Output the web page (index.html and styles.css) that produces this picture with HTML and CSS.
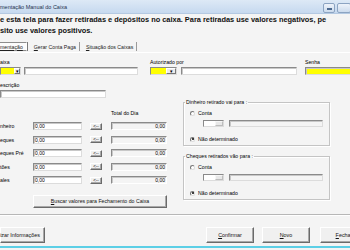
FILE: index.html
```html
<!DOCTYPE html>
<html lang="pt">
<head>
    <meta charset="UTF-8">
    <meta name="viewport" content="width=device-width, initial-scale=1.0">
    <title>Lançamento Manual do Caixa</title>
    <link rel="stylesheet" href="styles.css">
</head>
<body>
    <div class="titlebar">
        <span class="title">mentação Manual do Caixa</span>
        <div class="tb-buttons">
            <span class="tb-btn"><i class="min-glyph"></i></span>
            <span class="tb-btn"></span>
        </div>
    </div>

    <p class="intro">e esta tela para fazer retiradas e depósitos no caixa. Para retiradas use valores negativos, pe<br>sito use valores positivos.</p>

    <div class="tabs">
        <span class="tab active">mentação</span>
        <span class="tab"><u>G</u>erar Conta Paga</span>
        <span class="tab"><u>S</u>ituação dos Caixas</span>
    </div>

    <div class="panel">
        <div class="top-row">
            <div class="field f-caixa">
                <label>aixa</label>
                <div class="line">
                    <div class="combo c-caixa"><span class="drop">▾</span></div>
                    <div class="txt w-caixa"></div>
                </div>
            </div>
            <div class="field f-autor">
                <label>Autorizado por</label>
                <div class="line">
                    <div class="combo c-autor"><span class="drop">▾</span></div>
                    <div class="txt w-autor"></div>
                </div>
            </div>
            <div class="field f-senha">
                <label>Senha</label>
                <div class="txt yellow w-senha"></div>
            </div>
        </div>

        <div class="field f-descr">
            <label>escrição</label>
            <div class="txt w-descr"></div>
        </div>

        <div class="lower">
            <div class="values">
                <div class="total-head">Total do Dia</div>
                <div class="val-row"><span class="val-label">nheiro</span><div class="txt val">0,00</div><span class="btn arrow">&lt;--</span><div class="txt total">0,00</div></div>
                <div class="val-row"><span class="val-label">eques</span><div class="txt val">0,00</div><span class="btn arrow">&lt;--</span><div class="txt total">0,00</div></div>
                <div class="val-row"><span class="val-label">eques Pré</span><div class="txt val">0,00</div><span class="btn arrow">&lt;--</span><div class="txt total">0,00</div></div>
                <div class="val-row"><span class="val-label">tões</span><div class="txt val">0,00</div><span class="btn arrow">&lt;--</span><div class="txt total">0,00</div></div>
                <div class="val-row"><span class="val-label">ales</span><div class="txt val">0,00</div><span class="btn arrow">&lt;--</span><div class="txt total">0,00</div></div>
                <span class="btn buscar"><u>B</u>uscar valores para Fechamento do Caixa</span>
            </div>

            <div class="destinos">
                <fieldset class="group g-dinheiro">
                    <legend>Dinheiro retirado vai para :</legend>
                    <div class="radio-row"><span class="radio"></span>Conta</div>
                    <div class="sub-row"><div class="combo small"><span class="drop"></span></div><div class="txt conta"></div></div>
                    <div class="radio-row last"><span class="radio checked"></span>Não determinado</div>
                </fieldset>
                <fieldset class="group g-cheques">
                    <legend>Cheques retirados vão para :</legend>
                    <div class="radio-row"><span class="radio"></span>Conta</div>
                    <div class="sub-row"><div class="combo small"><span class="drop"></span></div><div class="txt conta"></div></div>
                    <div class="radio-row last"><span class="radio checked"></span>Não determinado</div>
                </fieldset>
            </div>
        </div>
    </div>

    <div class="actions">
        <span class="btn act b-info">izar Informações</span>
        <span class="btn act b-conf"><u>C</u>onfirmar</span>
        <span class="btn act b-novo"><u>N</u>ovo</span>
        <span class="btn act b-fech"><u>F</u>echar</span>
    </div>
    <div class="statusline"></div>
</body>
</html>
```

FILE: styles.css
```css
* {
    box-sizing: border-box;
}

html, body {
    margin: 0;
    width: 350px;
    height: 250px;
    overflow: hidden;
}

body {
    font-family: "Liberation Sans", Arial, sans-serif;
    font-size: 5.2px;
    color: #000;
    background-color: #f4f4f4;
}

/* title bar */
.titlebar {
    display: flex;
    justify-content: space-between;
    align-items: center;
    height: 14px;
    background: linear-gradient(#dde9f6, #c6d9ef);
    border-bottom: 1px solid #b4c9e2;
}

.title {
    font-size: 5.5px;
    color: #1e3350;
}

.tb-buttons {
    display: flex;
    gap: 2px;
    margin-right: -1px;
    align-self: flex-start;
    margin-top: 3px;
}

.tb-btn {
    display: flex;
    justify-content: center;
    align-items: center;
    width: 12px;
    height: 10px;
    border: 1px solid #8ca4c2;
    border-radius: 2px;
    background: linear-gradient(#eef3fa, #ccdbed);
}

.tb-btn:last-child {
    width: 14px;
}

.min-glyph {
    width: 5px;
    height: 2px;
    background-color: #4d6a90;
    margin-top: 2px;
}

/* intro */
.intro {
    margin: 0;
    font-size: 7.4px;
    font-weight: bold;
    line-height: 11px;
    white-space: nowrap;
    color: #111;
}

/* tabs */
.tabs {
    display: flex;
    height: 9px;
    margin-top: 6px;
    align-items: stretch;
}

.tab {
    display: flex;
    align-items: center;
    padding: 0 3px 0 4px;
    font-size: 5.2px;
    border-right: 1px solid #9a9a9a;
    margin-right: 2px;
    color: #222;
}

.tab.active {
    padding-left: 0;
    background-color: #fcfcfc;
    border: 1px solid #8d8d8d;
    border-left: none;
    border-right-color: #fff;
    box-shadow: 1px 0 0 #7a7a7a;
    margin-right: 3px;
    text-decoration: underline;
}

/* panel */
.panel {
    margin-top: 1px;
    border-top: 1px solid #fff;
    border-bottom: 1px solid #b7b7b7;
    box-shadow: 0 1px 0 #fff;
    padding-top: 6px;
    height: 163px;
}

label, .total-head {
    display: block;
    line-height: 7px;
    height: 7px;
}

.top-row {
    display: flex;
}

.line {
    display: flex;
    margin-top: 1px;
}

.txt {
    height: 8px;
    background-color: #fff;
    border: 1px solid;
    border-color: #8a8a8a #dcdcdc #dcdcdc #8a8a8a;
    box-shadow: inset 1px 1px 0 #c8c8c8;
    font-size: 5px;
    line-height: 6px;
    padding: 0 1px;
}

.yellow {
    background-color: #ffff00;
}

.combo {
    display: flex;
    justify-content: flex-end;
    height: 8px;
    background-color: #ffff00;
    border: 1px solid;
    border-color: #8a8a8a #dcdcdc #dcdcdc #8a8a8a;
}

.drop {
    width: 6px;
    background-color: #ececec;
    border: 1px solid;
    border-color: #fff #777 #777 #fff;
    font-size: 5px;
    line-height: 5px;
    text-align: center;
    color: #000;
}

.c-caixa {
    width: 21px;
}

.w-caixa {
    width: 114px;
    margin-left: 3px;
}

.f-autor {
    margin-left: 12px;
}

.c-autor {
    width: 27px;
}

.c-autor .drop {
    width: 10px;
}

.w-autor {
    width: 116px;
    margin-left: 4px;
}

.f-senha {
    margin-left: 8px;
}

.f-senha .txt {
    margin-top: 1px;
    width: 50px;
}

.f-descr {
    margin-top: 7px;
}

.w-descr {
    width: 106px;
    margin-top: 1px;
}

/* lower section */
.lower {
    display: flex;
}

.values {
    width: 183px;
    display: flex;
    flex-direction: column;
}

.total-head {
    margin: 11.5px 0 0 111px;
}

.val-row {
    display: flex;
    align-items: center;
    height: 8px;
    margin-top: 5.5px;
}

.val-row:first-of-type {
    margin-top: 6px;
}

.val-label {
    width: 33px;
}

.val {
    width: 49px;
}

.btn {
    display: flex;
    justify-content: center;
    align-items: center;
    background-color: #f0f0f0;
    border: 1px solid;
    border-color: #fff #6a6a6a #6a6a6a #fff;
    box-shadow: inset -1px -1px 0 #a8a8a8;
    color: #111;
}

.arrow {
    width: 12px;
    height: 7px;
    margin: 0 9px 0 8px;
    font-size: 4.5px;
}

.total {
    width: 56px;
    text-align: right;
    background-color: #f4f4f4;
    border-color: #8a8a8a #fff #fff #8a8a8a;
}

.buscar {
    width: 134px;
    height: 13px;
    margin: 10.5px 0 0 33px;
    font-size: 5.2px;
}

.destinos {
    width: 147px;
}

.group {
    margin: 0;
    padding: 4px 0 3px 6px;
    border: 1px solid #c4c4c4;
    box-shadow: 1px 1px 0 #fff, inset 1px 1px 0 #fff;
    height: 47px;
}

.g-dinheiro {
    margin-top: 0.5px;
}

.g-cheques {
    margin-top: 7px;
}

legend {
    padding: 0 1px;
    margin-left: -5px;
    line-height: 7px;
}

.radio-row {
    display: flex;
    align-items: center;
    height: 7px;
    gap: 3px;
}

.radio-row.last {
    margin-top: 8.5px;
}

.radio {
    width: 5px;
    height: 5px;
    border-radius: 50%;
    background-color: #fff;
    border: 1px solid;
    border-color: #777 #ddd #ddd #777;
    display: flex;
    justify-content: center;
    align-items: center;
}

.radio.checked::after {
    content: "";
    width: 2px;
    height: 2px;
    border-radius: 50%;
    background-color: #000;
}

.sub-row {
    display: flex;
    margin: 3.5px 0 0 13px;
}

.combo.small {
    width: 21px;
    height: 7px;
    background-color: #fff;
}

.combo.small .drop {
    width: 8px;
    background-color: #e8e8e8;
    border-color: #f6f6f6 #bdbdbd #bdbdbd #f6f6f6;
}

.conta {
    width: 94px;
    height: 7px;
    margin-left: 5px;
    background-color: #f4f4f4;
}

/* bottom buttons */
.actions {
    display: flex;
    margin-top: 12px;
    white-space: nowrap;
}

.act {
    height: 16px;
    width: 48px;
    flex-shrink: 0;
    font-size: 5.4px;
}

.b-info {
    width: 45px;
    justify-content: flex-end;
    padding-right: 4px;
}

.b-conf {
    margin-left: 161px;
}

.b-novo {
    margin-left: 8px;
}

.b-fech {
    margin-left: 10px;
}

.statusline {
    height: 2px;
    margin-top: 3px;
    background-color: #5ccfe6;
}
```
